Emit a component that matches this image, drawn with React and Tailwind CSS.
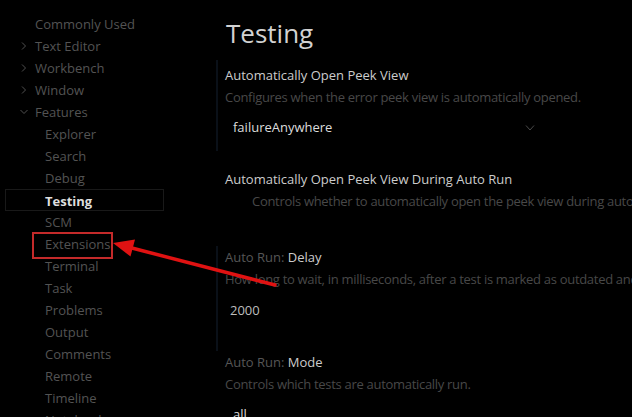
const sidebar = [
  { label: "Commonly Used", level: 0 },
  { label: "Text Editor", level: 0, chevron: "right" },
  { label: "Workbench", level: 0, chevron: "right" },
  { label: "Window", level: 0, chevron: "right" },
  { label: "Features", level: 0, chevron: "down" },
  { label: "Explorer", level: 1 },
  { label: "Search", level: 1 },
  { label: "Debug", level: 1 },
  { label: "Testing", level: 1, active: true },
  { label: "SCM", level: 1 },
  { label: "Extensions", level: 1 },
  { label: "Terminal", level: 1 },
  { label: "Task", level: 1 },
  { label: "Problems", level: 1 },
  { label: "Output", level: 1 },
  { label: "Comments", level: 1 },
  { label: "Remote", level: 1 },
  { label: "Timeline", level: 1 },
  { label: "Notebook", level: 1 },
];

function Chevron({ dir }) {
  return (
    <svg width="10" height="10" viewBox="0 0 10 10" className="shrink-0">
      {dir === "right" ? (
        <path d="M3 1.5 L6.5 5 L3 8.5" fill="none" stroke="#505050" strokeWidth="1" />
      ) : (
        <path d="M1.5 3 L5 6.5 L8.5 3" fill="none" stroke="#505050" strokeWidth="1" />
      )}
    </svg>
  );
}

function SideItem({ item }) {
  const pad = item.level === 0 ? "pl-[35px]" : "pl-[45px]";
  return (
    <div
      className={`relative h-[22px] leading-[22px] ${pad} ${
        item.active
          ? "border border-[#191919] mx-[5px] !pl-[39px] w-[159px] font-bold text-[#dedede]"
          : "text-[#535353]"
      }`}
    >
      {item.chevron && (
        <span className="absolute left-[19px] top-[6px]">
          <Chevron dir={item.chevron} />
        </span>
      )}
      {item.label}
    </div>
  );
}

function Setting({ category, title, desc, indentDesc, children, marker, className }) {
  return (
    <div className={`relative pl-[9px] ${className}`}>
      {marker && (
        <div className="absolute left-0 top-0 bottom-0 w-[2px] bg-[#0a1018]" />
      )}
      <div className="h-[22px] leading-[22px] text-[13px] whitespace-nowrap">
        {category && <span className="text-[#565656]">{category}</span>}
        <span className="text-[#cccccc]">{title}</span>
      </div>
      <div
        className={`h-[22px] leading-[22px] text-[#484848] whitespace-nowrap tracking-[-0.3px] ${
          indentDesc ? "pl-[27px]" : ""
        }`}
      >
        {desc}
      </div>
      {children}
    </div>
  );
}

export default function App() {
  return (
    <div
      className="relative w-[632px] h-[417px] overflow-hidden bg-black text-[13px]"
      style={{ fontFamily: '"Open Sans", "Noto Sans", sans-serif' }}
    >
      <div className="flex h-full">
        <div className="w-[216px] shrink-0 pt-[13px]">
          {sidebar.map((it) => (
            <SideItem key={it.label} item={it} />
          ))}
        </div>
        <div className="flex-1 min-w-0 overflow-hidden">
          <div className="pl-[10px] pt-[14px] h-[60px] text-[26px] leading-[38px] text-[#d2d2d2]">
            Testing
          </div>
          <Setting
            title="Automatically Open Peek View"
            desc="Configures when the error peek view is automatically opened."
            marker
            className="pt-[4px] pb-[10px]"
          >
            <div className="mt-[7px] w-[322px] h-[26px] flex items-center justify-between pl-[8px] pr-[12px] text-[#dcdcdc]">
              <span>failureAnywhere</span>
              <svg width="10" height="8" viewBox="0 0 10 8">
                <path d="M1 1.5 L5 6 L9 1.5" fill="none" stroke="#4a4a4a" strokeWidth="1" />
              </svg>
            </div>
          </Setting>
          <Setting
            title="Automatically Open Peek View During Auto Run"
            desc="Controls whether to automatically open the peek view during auto run."
            indentDesc
            className="pt-[17px] pb-[34px]"
          />
          <Setting
            category="Auto Run: "
            title="Delay"
            desc="How long to wait, in milliseconds, after a test is marked as outdated and before starting a new run."
            marker
            className="pb-[28px]"
          >
            <div className="mt-[7px] h-[26px] leading-[26px] pl-[5px] text-[#bdbdbd]">2000</div>
          </Setting>
          <Setting
            category="Auto Run: "
            title="Mode"
            desc="Controls which tests are automatically run."
          >
            <div className="mt-[6px] h-[26px] leading-[26px] pl-[8px] text-[#dcdcdc]">all</div>
          </Setting>
        </div>
      </div>

      <div className="absolute left-[32px] top-[232px] w-[81px] h-[27px] border-2 border-[#c42a2a] pointer-events-none" />
      <svg
        className="absolute left-0 top-0 pointer-events-none"
        width="632"
        height="417"
        viewBox="0 0 632 417"
      >
        <line x1="275" y1="285" x2="128" y2="247" stroke="#e01212" strokeWidth="3.5" strokeLinecap="round" />
        <polygon points="113,243 135,239.5 130.5,256.5" fill="#e01212" />
      </svg>
    </div>
  );
}
